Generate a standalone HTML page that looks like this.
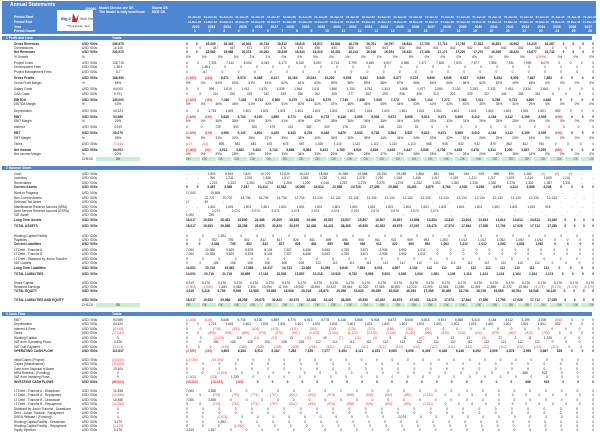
<!DOCTYPE html>
<html><head><meta charset="utf-8"><style>
body{margin:0;width:600px;height:432px;background:#fff;position:relative;overflow:hidden;font-family:"Liberation Sans",sans-serif;color:#222}
.hd{position:absolute;left:2px;top:1px;width:594px;height:33px;background:#4f86d2;color:#fff}
.hd div{position:absolute;font-size:3.4px;line-height:4px;font-weight:bold;white-space:nowrap}
.logo{position:absolute;left:57px;top:10px;width:36px;height:21px;background:#fff}
.sec{position:absolute;left:2px;width:590px;height:4px;background:#4f86d2;color:#fff;font-size:3.3px;line-height:4px;font-weight:bold}
.r{position:absolute;left:0;width:600px;height:4px;font-size:3.2px;line-height:4px;white-space:nowrap}
.r span{position:absolute}
.l{left:14px}.u{left:82px}.t{left:96px;width:44px;text-align:center}
.d{left:186px;width:408px;text-align:justify;text-align-last:justify;white-space:normal;height:4px;overflow:hidden}
.b{font-weight:bold}
.red{color:#e33}
.chk .t{background:#c6efce}
.chk .d{background:repeating-linear-gradient(90deg,#c6efce 0 14px,#fff 14px 15.8px);color:#2a6a2a}
</style></head><body>
<div class="hd">
<div style="left:8px;top:2px;font-size:5px">Annual Statements</div>
<div style="left:83px;top:6px">100000</div>
<div style="left:97px;top:5px">Model Checks are OK</div>
<div style="left:97px;top:9px">The Model is fully functional</div>
<div style="left:150px;top:5px">Macro OK</div>
<div style="left:150px;top:9px">MCE OK</div>
<div style="left:12px;top:14px">Period Start</div>
<div style="left:12px;top:19px">Period End</div>
<div style="left:12px;top:24px">Year</div>
<div style="left:12px;top:28px">Period Count</div>
<div style="left:186px;top:14px;width:408px;text-align:justify;text-align-last:justify;font-size:2.8px">01-Jan-22 01-Jan-23 01-Jan-24 01-Jan-25 01-Jan-26 01-Jan-27 01-Jan-28 01-Jan-29 01-Jan-30 01-Jan-31 01-Jan-32 01-Jan-33 01-Jan-34 01-Jan-35 01-Jan-36 01-Jan-37 01-Jan-38 01-Jan-39 01-Jan-40 01-Jan-41 01-Jan-42 01-Jan-43 01-Jan-44 01-Jan-45 01-Jan-46 01-Jan-47</div>
<div style="left:186px;top:19px;width:408px;text-align:justify;text-align-last:justify;font-size:2.8px">31-Dec-22 31-Dec-23 31-Dec-24 31-Dec-25 31-Dec-26 31-Dec-27 31-Dec-28 31-Dec-29 31-Dec-30 31-Dec-31 31-Dec-32 31-Dec-33 31-Dec-34 31-Dec-35 31-Dec-36 31-Dec-37 31-Dec-38 31-Dec-39 31-Dec-40 31-Dec-41 31-Dec-42 31-Dec-43 31-Dec-44 31-Dec-45 31-Dec-46 31-Dec-47</div>
<div style="left:190px;top:24px;width:400px;text-align:justify;text-align-last:justify">2022 2023 2024 2025 2026 2027 2028 2029 2030 2031 2032 2033 2034 2035 2036 2037 2038 2039 2040 2041 2042 2043 2044 2045 2046 2047</div>
<div style="left:192px;top:28px;width:398px;text-align:justify;text-align-last:justify">1 2 3 4 5 6 7 8 9 10 11 12 13 14 15 16 17 18 19 20 21 22 23 24 25 26</div>
</div>
<div class="logo"><svg width="36" height="21" viewBox="0 0 36 21"><text x="4" y="10" font-size="4" fill="#1a4fa0" font-family="Liberation Sans" font-weight="bold">Big 4</text><path d="M16 3 L19 9 L22 4 L20 12 L15 12 Z" fill="#e02020"/><text x="23" y="10" font-size="3.5" fill="#1a4fa0" font-family="Liberation Sans">Wall Street</text><text x="10" y="17" font-size="3" fill="#333" font-family="Liberation Sans">Think Deals. Sell</text></svg></div>

<div class="sec" style="top:36px"><span style="position:absolute;left:4px">1 Profit and Loss</span><span style="position:absolute;left:110px">Totals</span></div>

<div class="r b" style="top:42px"><span class="l">Gross Revenues</span><span class="u">USD '000s</span><span class="t">336,670</span><span class="d">0 0 16,409 16,433 16,844 16,733 16,812 16,819 16,817 16,891 16,749 16,701 16,797 16,844 17,709 17,712 17,762 17,812 16,851 16,962 16,219 16,287 0 0 0 0</span></div>
<div class="r" style="top:46px"><span class="l">Commissions</span><span class="u">USD '000s</span><span class="t">10,100</span><span class="d">0 0 447 447 471 471 476 475 498 500 508 503 503 503 541 541 542 542 543 542 542 545 0 0 0 0</span></div>
<div class="r b" style="top:50px"><span class="l">Net Revenues</span><span class="u">USD '000s</span><span class="t">326,570</span><span class="d">0 0 15,962 15,986 16,373 16,262 16,336 16,344 16,319 16,391 16,241 16,198 16,294 16,341 17,168 17,171 17,220 17,270 16,308 16,420 15,677 15,742 0 0 0 0</span></div>
<div class="r" style="top:55px"><span class="l">% Growth</span><span class="u">%</span><span class="d">0% 0% 0% 0% 2% 1% 0% 0% 0% 0% 1% 0% 1% 0% 5% 0% 0% 0% 6% 1% 5% 0% <i class="red">(100%)</i> 0% 0% 0%</span></div>
<div class="r" style="top:61px"><span class="l">Project Costs</span><span class="u">USD '000s</span><span class="t">135,715</span><span class="d">0 0 7,391 7,412 8,005 8,045 6,173 6,310 6,067 6,713 6,799 6,649 6,917 6,966 7,472 7,526 7,603 7,677 7,854 7,911 7,990 8,079 0 0 0 0</span></div>
<div class="r" style="top:65px"><span class="l">Development Fees</span><span class="u">USD '000s</span><span class="t">1,803</span><span class="d">0 1,803 0 0 0 0 0 0 0 0 0 0 0 0 0 0 0 0 0 0 0 0 0 0 0 0</span></div>
<div class="r" style="top:70px"><span class="l">Project Management Fees</span><span class="u">USD '000s</span><span class="t">117</span><span class="d">0 117 0 0 0 0 0 0 0 0 0 0 0 0 0 0 0 0 0 0 0 0 0 0 0 0</span></div>
<div class="r b" style="top:76px"><span class="l">Gross Profits</span><span class="u">USD '000s</span><span class="t">188,930</span><span class="d"><i class="red">(1,920)</i> <i class="red">(116)</i> 8,571 8,574 8,368 8,217 10,163 10,034 10,252 9,678 9,442 9,549 9,377 9,375 9,696 9,645 9,617 9,593 8,454 8,509 7,687 7,663 0 0 0 0</span></div>
<div class="r" style="top:81px"><span class="l">Gross Profit Margin</span><span class="u">%</span><span class="t">58%</span><span class="d">0% 0% 54% 54% 51% 51% 62% 61% 63% 59% 58% 59% 58% 57% 56% 56% 56% 56% 52% 52% 49% 49% 0% 0% 0% 0%</span></div>
<div class="r" style="top:87px"><span class="l">Salary Costs</span><span class="u">USD '000s</span><span class="t">44,000</span><span class="d">0 0 999 1,019 1,412 1,475 1,539 1,564 1,611 1,660 1,709 1,761 1,813 1,868 1,977 2,060 2,130 2,253 2,332 2,451 2,534 2,661 0 0 0 0</span></div>
<div class="r" style="top:92px"><span class="l">G&amp;A Costs</span><span class="u">USD '000s</span><span class="t">5,701</span><span class="d">0 0 212 220 225 242 249 256 262 269 277 283 290 298 305 313 321 329 337 345 353 362 0 0 0 0</span></div>
<div class="r b" style="top:98px"><span class="l">EBITDA</span><span class="u">USD '000s</span><span class="t">139,000</span><span class="d"><i class="red">(1,920)</i> <i class="red">(116)</i> 7,360 7,335 6,731 6,500 8,375 8,214 8,379 7,749 7,456 7,505 7,274 7,209 7,414 7,272 7,166 7,011 5,785 5,713 4,800 4,640 0 0 0 0</span></div>
<div class="r" style="top:102px"><span class="l">EBITDA Margin</span><span class="u">%</span><span class="t">43%</span><span class="d">0% 0% 46% 46% 41% 40% 51% 50% 51% 47% 46% 46% 45% 44% 43% 42% 42% 41% 35% 35% 31% 29% 0% 0% 0% 0%</span></div>
<div class="r" style="top:109px"><span class="l">Depreciation</span><span class="u">USD '000s</span><span class="t">44,324</span><span class="d">0 0 1,715 1,601 1,601 1,601 1,601 1,601 1,601 1,601 1,601 1,601 1,601 1,601 1,601 1,601 1,601 1,601 1,601 1,601 1,601 1,601 692 0 0 0</span></div>
<div class="r b" style="top:115px"><span class="l">EBIT</span><span class="u">USD '000s</span><span class="t">94,989</span><span class="d"><i class="red">(1,920)</i> <i class="red">(116)</i> 5,645 5,734 5,130 4,899 6,774 6,613 6,778 6,148 5,855 5,904 5,673 5,608 5,813 5,671 5,565 5,410 4,184 4,112 3,199 3,039 <i class="red">(692)</i> 0 0 0</span></div>
<div class="r" style="top:119px"><span class="l">EBIT Margin</span><span class="u">%</span><span class="t">29%</span><span class="d">0% 0% 35% 36% 31% 30% 41% 40% 42% 38% 36% 36% 35% 34% 34% 33% 32% 31% 26% 25% 20% 19% 0% 0% 0% 0%</span></div>
<div class="r" style="top:125px"><span class="l">Interest</span><span class="u">USD '000s</span><span class="t">4,919</span><span class="d">0 0 739 591 526 479 431 382 330 278 223 168 110 51 0 0 0 0 0 0 0 0 0 0 0 0</span></div>
<div class="r b" style="top:131px"><span class="l">EBT</span><span class="u">USD '000s</span><span class="t">90,070</span><span class="d"><i class="red">(1,920)</i> <i class="red">(116)</i> 4,906 5,143 4,604 4,420 6,343 6,231 6,448 5,870 5,632 5,736 5,563 5,557 5,813 5,671 5,565 5,410 4,184 4,112 3,199 3,039 <i class="red">(692)</i> 0 0 0</span></div>
<div class="r" style="top:136px"><span class="l">EBT Margin</span><span class="u">%</span><span class="t">28%</span><span class="d">0% 0% 31% 32% 28% 27% 39% 38% 40% 36% 35% 35% 34% 34% 34% 33% 32% 31% 26% 25% 20% 19% 0% 0% 0% 0%</span></div>
<div class="r" style="top:142px"><span class="l">Taxes</span><span class="u">USD '000s</span><span class="t red">17,044</span><span class="d"><i class="red">(17)</i> <i class="red">(23)</i> 895 681 681 676 675 667 1,025 1,110 1,110 1,110 1,110 1,110 968 935 932 932 870 862 812 784 0 0 0 0</span></div>
<div class="r b" style="top:148px"><span class="l">Net Income</span><span class="u">USD '000s</span><span class="t">64,001</span><span class="d"><i class="red">(1,903)</i> <i class="red">(93)</i> 4,011 4,462 3,923 3,744 5,668 5,564 5,423 4,760 4,522 4,626 4,453 4,447 4,845 4,736 4,633 4,478 3,314 3,250 2,387 2,255 <i class="red">(692)</i> 0 0 0</span></div>
<div class="r" style="top:152px"><span class="l">Net Income Margin</span><span class="u">%</span><span class="t">20%</span><span class="d">0% 0% 25% 28% 24% 23% 35% 34% 33% 29% 28% 28% 27% 27% 28% 28% 27% 26% 20% 20% 15% 14% 0% 0% 0% 0%</span></div>
<div class="r chk" style="top:157px"><span class="u">CHECK</span><span class="t">OK</span><span class="d">OK OK OK OK OK OK OK OK OK OK OK OK OK OK OK OK OK OK OK OK OK OK OK OK OK OK</span></div>

<div class="sec" style="top:166px"><span style="position:absolute;left:4px">2 Balance Sheet</span></div>

<div class="r" style="top:172px"><span class="l">Cash</span><span class="u">USD '000s</span><span class="d">- - 1,500 8,524 7,820 10,270 12,020 15,012 18,081 21,085 23,588 26,252 29,289 1,806 881 956 940 925 858 870 1,262 <i class="red">(0)</i> <i class="red">(0)</i> <i class="red">(0)</i> - -</span></div>
<div class="r" style="top:176px"><span class="l">Inventory</span><span class="u">USD '000s</span><span class="d">- - 766 1,231 1,003 1,626 1,617 1,583 1,228 1,163 1,278 1,292 1,015 1,408 1,417 1,419 1,221 1,217 1,675 1,614 1,609 1,241 - -</span></div>
<div class="r" style="top:181px"><span class="l">Receivables</span><span class="u">USD '000s</span><span class="d">- - 1,222 1,224 1,263 1,293 1,265 1,290 1,318 1,267 1,275 1,275 1,276 1,282 1,352 1,352 1,318 1,352 1,378 1,342 1,357 1,331 - -</span></div>
<div class="r b" style="top:185px"><span class="l">Current Assets</span><span class="u">USD '000s</span><span class="d">0 0 3,487 3,368 7,287 10,414 12,582 16,066 18,614 22,558 24,728 27,495 29,868 33,261 4,675 3,764 4,030 4,036 3,979 4,114 3,898 4,246 0 0 0 0</span></div>
<div class="r" style="top:191px"><span class="l">Work in Progress</span><span class="u">USD '000s</span><span class="d">17,000 19,658 - - - - - - - - - - - - - - - - - - - - - - - -</span></div>
<div class="r" style="top:196px"><span class="l">Non-Current Assets</span><span class="u">USD '000s</span><span class="d">- - 22,737 20,737 18,736 16,735 14,735 12,734 12,134 12,134 12,134 12,134 12,134 12,134 12,134 12,134 12,134 12,134 12,134 12,134 12,134 12,134 - - - -</span></div>
<div class="r" style="top:200px"><span class="l">Deferred Tax Asset</span><span class="u">USD '000s</span><span class="d">17 40 - - - - - - - - - - - - - - - - - - - - - - - -</span></div>
<div class="r" style="top:205px"><span class="l">Maintenance Reserve Account (MRA)</span><span class="u">USD '000s</span><span class="d">- - 1,601 1,601 1,601 1,601 1,601 1,601 1,601 1,601 1,601 1,601 1,601 1,601 1,601 1,601 1,601 1,601 1,601 1,601 1,601 915 - - - -</span></div>
<div class="r" style="top:209px"><span class="l">Debt Service Reserve Account (DSRA)</span><span class="u">USD '000s</span><span class="d">- - 2,074 2,074 2,074 2,074 2,074 2,074 2,074 2,074 2,074 2,074 2,074 2,074 - - - - - - - - - - - -</span></div>
<div class="r" style="top:213px"><span class="l">VAT Asset</span><span class="u">USD '000s</span><span class="d">1,000 235 - - - - - - - - - - - - - - - - - - - - - - - -</span></div>
<div class="r b" style="top:218px"><span class="l">Long Term Assets</span><span class="u">USD '000s</span><span class="d">18,017 19,933 26,481 24,890 22,388 20,409 18,388 16,360 15,807 15,807 15,807 15,807 15,807 13,806 13,804 13,810 13,814 13,814 13,814 13,814 13,814 13,049 0 0 0 0</span></div>
<div class="r b" style="top:224px"><span class="l">TOTAL ASSETS</span><span class="u">USD '000s</span><span class="d">18,017 19,933 29,968 28,258 29,675 30,823 30,970 32,426 34,421 38,365 40,535 43,302 45,675 47,067 18,479 17,574 17,844 17,850 17,793 17,928 17,712 17,295 0 0 0 0</span></div>
<div class="r" style="top:234px"><span class="l">Working Capital Facility</span><span class="u">USD '000s</span><span class="d">0 0 1,592 0 0 0 0 0 0 0 0 0 0 0 0 0 0 0 0 0 0 0 0 0 0 0</span></div>
<div class="r" style="top:238px"><span class="l">Payables</span><span class="u">USD '000s</span><span class="d">0 0 762 795 802 812 817 825 881 899 898 906 911 922 969 993 1,002 1,012 1,012 1,052 1,052 1,062 0 0 0 0</span></div>
<div class="r b" style="top:242px"><span class="l">Current Liabilities</span><span class="u">USD '000s</span><span class="d">0 0 2,354 795 802 812 817 825 881 899 898 906 911 922 969 993 1,002 1,012 1,012 1,052 1,052 1,062 0 0 0 0</span></div>
<div class="r" style="top:248px"><span class="l">LT Debt - Tranche A</span><span class="u">USD '000s</span><span class="d">7,000 10,358 9,629 8,878 8,104 7,307 6,486 5,643 4,769 3,871 2,945 1,992 1,011 0 0 0 0 0 0 0 0 0 0 0 0 0</span></div>
<div class="r" style="top:252px"><span class="l">LT Debt - Tranche B</span><span class="u">USD '000s</span><span class="d">7,000 10,358 9,629 8,878 8,104 7,307 6,486 5,643 4,769 3,871 2,945 1,992 1,011 0 0 0 0 0 0 0 0 0 0 0 0 0</span></div>
<div class="r" style="top:257px"><span class="l">LT Debt - Standard by Junior Tranche</span><span class="u">USD '000s</span><span class="d">0 0 0 0 0 0 0 0 0 0 0 0 0 0 0 0 0 0 0 0 0 0 0 0 0 0</span></div>
<div class="r" style="top:261px"><span class="l">VAT Liability</span><span class="u">USD '000s</span><span class="d">0 0 105 108 108 108 108 108 112 112 112 112 112 112 112 112 112 112 112 112 112 112 0 0 0 0</span></div>
<div class="r b" style="top:266px"><span class="l">Long Term Liabilities</span><span class="u">USD '000s</span><span class="d">14,001 20,716 19,362 17,864 16,317 14,723 13,080 11,393 9,649 7,853 6,001 4,097 2,134 112 112 112 112 112 112 112 112 112 0 0 0 0</span></div>
<div class="r b" style="top:272px"><span class="l">TOTAL LIABILITIES</span><span class="u">USD '000s</span><span class="d">14,001 20,716 21,716 18,659 17,119 15,535 13,897 12,218 10,530 8,752 6,899 5,003 3,045 1,034 1,081 1,105 1,114 1,124 1,124 1,164 1,164 1,174 0 0 0 0</span></div>
<div class="r" style="top:281px"><span class="l">Share Capital</span><span class="u">USD '000s</span><span class="d">5,919 5,176 5,176 5,176 5,176 5,176 5,176 5,176 5,176 5,176 5,176 5,176 5,176 5,176 5,176 5,176 5,176 5,176 5,176 5,176 5,176 5,176 5,176 5,176 5,176 5,176</span></div>
<div class="r" style="top:285px"><span class="l">Retained Earnings</span><span class="u">USD '000s</span><span class="d"><i class="red">(1,903)</i> <i class="red">(1,960)</i> 1,484 4,462 7,404 10,094 11,760 15,042 18,494 24,122 28,444 32,320 37,563 40,857 12,222 11,293 11,554 11,550 11,493 11,588 11,372 10,944 <i class="red">(5,176)</i> <i class="red">(5,176)</i> <i class="red">(5,176)</i> <i class="red">(5,176)</i></span></div>
<div class="r b" style="top:289px"><span class="l">TOTAL EQUITY</span><span class="u">USD '000s</span><span class="d">4,016 3,216 5,705 9,599 12,580 15,288 16,936 20,218 23,670 29,298 33,620 38,299 42,630 46,033 17,398 16,469 16,730 16,726 16,669 16,764 16,548 16,120 0 0 0 0</span></div>
<div class="r b" style="top:298px"><span class="l">TOTAL LIABILITIES AND EQUITY</span><span class="u">USD '000s</span><span class="d">18,017 19,933 29,968 28,258 29,675 30,823 30,970 32,426 34,421 38,365 40,535 43,302 45,675 47,067 18,479 17,574 17,844 17,850 17,793 17,928 17,712 17,295 0 0 0 0</span></div>
<div class="r chk" style="top:303px"><span class="u">CHECK</span><span class="t">OK</span><span class="d">OK OK OK OK OK OK OK OK OK OK OK OK OK OK OK OK OK OK OK OK OK OK OK OK OK OK</span></div>

<div class="sec" style="top:312px"><span style="position:absolute;left:4px">3 Cash Flow</span><span style="position:absolute;left:110px">Totals</span></div>

<div class="r" style="top:318px"><span class="l">EBIT</span><span class="u">USD '000s</span><span class="t">94,989</span><span class="d"><i class="red">(1,920)</i> <i class="red">(116)</i> 5,645 5,734 5,130 4,899 6,774 6,613 6,778 6,148 5,855 5,904 5,673 5,608 5,813 5,671 5,565 5,410 4,184 4,112 3,199 3,039 <i class="red">(692)</i> 0 0 0</span></div>
<div class="r" style="top:322px"><span class="l">Depreciation</span><span class="u">USD '000s</span><span class="t">44,324</span><span class="d">0 0 1,715 1,601 1,601 1,601 1,601 1,601 1,601 1,601 1,601 1,601 1,601 1,601 1,601 1,601 1,601 1,601 1,601 1,601 1,601 1,601 692 0 0 0</span></div>
<div class="r" style="top:327px"><span class="l">Interest &amp; Fees</span><span class="u">USD '000s</span><span class="t red">(4,919)</span><span class="d">0 0 <i class="red">(739)</i> <i class="red">(591)</i> <i class="red">(526)</i> <i class="red">(479)</i> <i class="red">(431)</i> <i class="red">(382)</i> <i class="red">(330)</i> <i class="red">(278)</i> <i class="red">(223)</i> <i class="red">(168)</i> <i class="red">(110)</i> <i class="red">(51)</i> 0 0 0 0 0 0 0 0 0 0 0 0</span></div>
<div class="r" style="top:331px"><span class="l">Taxes</span><span class="u">USD '000s</span><span class="t red">(17,044)</span><span class="d">0 0 <i class="red">(895)</i> <i class="red">(681)</i> <i class="red">(681)</i> <i class="red">(676)</i> <i class="red">(675)</i> <i class="red">(667)</i> <i class="red">(1,025)</i> <i class="red">(1,110)</i> <i class="red">(1,110)</i> <i class="red">(1,110)</i> <i class="red">(1,110)</i> <i class="red">(1,110)</i> <i class="red">(968)</i> <i class="red">(935)</i> <i class="red">(932)</i> <i class="red">(932)</i> <i class="red">(870)</i> <i class="red">(862)</i> <i class="red">(812)</i> <i class="red">(784)</i> 0 0 0 0</span></div>
<div class="r" style="top:336px"><span class="l">Working Capital</span><span class="u">USD '000s</span><span class="t">0</span><span class="d">0 0 <i class="red">(1,226)</i> 118 <i class="red">(11)</i> <i class="red">(13)</i> 13 <i class="red">(10)</i> 49 <i class="red">(7)</i> <i class="red">(12)</i> <i class="red">(4)</i> 6 11 <i class="red">(47)</i> 8 12 13 <i class="red">(9)</i> 27 2 11 1,329 0 0 0</span></div>
<div class="r" style="top:340px"><span class="l">VAT from Operating Flows</span><span class="u">USD '000s</span><span class="t">3,226</span><span class="d">0 0 105 108 108 108 108 108 112 112 112 112 112 112 112 112 112 112 112 112 112 112 0 0 0 0</span></div>
<div class="r" style="top:345px"><span class="l">VAT Due Payment</span><span class="u">USD '000s</span><span class="t red">(3,214)</span><span class="d">0 0 0 <i class="red">(105)</i> <i class="red">(108)</i> <i class="red">(108)</i> <i class="red">(108)</i> <i class="red">(108)</i> <i class="red">(108)</i> <i class="red">(112)</i> <i class="red">(112)</i> <i class="red">(112)</i> <i class="red">(112)</i> <i class="red">(112)</i> <i class="red">(112)</i> <i class="red">(112)</i> <i class="red">(112)</i> <i class="red">(112)</i> <i class="red">(112)</i> <i class="red">(112)</i> <i class="red">(112)</i> <i class="red">(112)</i> <i class="red">(112)</i> 0 0 0</span></div>
<div class="r b" style="top:349px"><span class="l">OPERATING CASH FLOW</span><span class="u">USD '000s</span><span class="t">119,837</span><span class="d"><i class="red">(1,920)</i> <i class="red">(116)</i> 4,605 6,184 5,513 5,332 7,282 7,155 7,077 6,354 6,111 6,223 6,060 6,059 6,399 6,345 6,246 6,092 4,906 4,878 3,990 3,867 525 0 0 0</span></div>
<div class="r" style="top:358px"><span class="l">Initial Capex (Project)</span><span class="u">USD '000s</span><span class="t red">(33,000)</span><span class="d"><i class="red">(17,000)</i> <i class="red">(16,000)</i> 0 0 0 0 0 0 0 0 0 0 0 0 0 0 0 0 0 0 0 0 0 0 0 0</span></div>
<div class="r" style="top:362px"><span class="l">Capex (Maintenance)</span><span class="u">USD '000s</span><span class="t red">(33,000)</span><span class="d">0 0 0 0 0 0 0 0 0 0 0 0 0 0 0 0 0 0 0 0 0 0 0 0 0 0</span></div>
<div class="r" style="top:367px"><span class="l">Cash from Disposal of Asset</span><span class="u">USD '000s</span><span class="t">13,404</span><span class="d">0 0 0 0 0 0 0 0 0 0 0 0 0 0 0 0 0 0 0 0 0 0 0 0 0 0</span></div>
<div class="r" style="top:371px"><span class="l">MRA Release / (Funding)</span><span class="u">USD '000s</span><span class="t">0</span><span class="d">0 0 <i class="red">(1,601)</i> 0 0 0 0 0 0 0 0 0 0 0 0 0 0 0 0 0 0 686 915 0 0 0</span></div>
<div class="r" style="top:375px"><span class="l">VAT from Investing Flows</span><span class="u">USD '000s</span><span class="t">0</span><span class="d"><i class="red">(1,000)</i> <i class="red">(235)</i> 1,235 0 0 0 0 0 0 0 0 0 0 0 0 0 0 0 0 0 0 0 0 0 0 0</span></div>
<div class="r b" style="top:380px"><span class="l">INVESTING CASH FLOWS</span><span class="u">USD '000s</span><span class="t red">(86,000)</span><span class="d"><i class="red">(18,000)</i> <i class="red">(16,235)</i> <i class="red">(366)</i> 0 0 0 0 0 0 0 0 0 0 0 0 0 0 0 0 0 0 686 915 0 0 0</span></div>
<div class="r" style="top:389px"><span class="l">LT Debt - Tranche A - Drawdown</span><span class="u">USD '000s</span><span class="t">10,358</span><span class="d">7,000 3,358 0 0 0 0 0 0 0 0 0 0 0 0 0 0 0 0 0 0 0 0 0 0 0 0</span></div>
<div class="r" style="top:393px"><span class="l">LT Debt - Tranche A - Repayment</span><span class="u">USD '000s</span><span class="t red">(10,358)</span><span class="d">0 0 <i class="red">(729)</i> <i class="red">(751)</i> <i class="red">(774)</i> <i class="red">(797)</i> <i class="red">(821)</i> <i class="red">(843)</i> <i class="red">(874)</i> <i class="red">(898)</i> <i class="red">(926)</i> <i class="red">(953)</i> <i class="red">(981)</i> <i class="red">(1,011)</i> 0 0 0 0 0 0 0 0 0 0 0 0</span></div>
<div class="r" style="top:398px"><span class="l">LT Debt - Tranche B - Drawdown</span><span class="u">USD '000s</span><span class="t">10,358</span><span class="d">7,000 3,358 0 0 0 0 0 0 0 0 0 0 0 0 0 0 0 0 0 0 0 0 0 0 0 0</span></div>
<div class="r" style="top:402px"><span class="l">LT Debt - Tranche B - Repayment</span><span class="u">USD '000s</span><span class="t red">(10,358)</span><span class="d">0 0 <i class="red">(729)</i> <i class="red">(751)</i> <i class="red">(774)</i> <i class="red">(797)</i> <i class="red">(821)</i> <i class="red">(843)</i> <i class="red">(874)</i> <i class="red">(898)</i> <i class="red">(926)</i> <i class="red">(953)</i> <i class="red">(981)</i> <i class="red">(1,011)</i> 0 0 0 0 0 0 0 0 0 0 0 0</span></div>
<div class="r" style="top:407px"><span class="l">Standard by Junior Tranche - Drawdown</span><span class="u">USD '000s</span><span class="t">0</span><span class="d">0 0 0 0 0 0 0 0 0 0 0 0 0 0 0 0 0 0 0 0 0 0 0 0 0 0</span></div>
<div class="r" style="top:411px"><span class="l">Debt - Junior Tranche - Repayment</span><span class="u">USD '000s</span><span class="t">0</span><span class="d">0 0 0 0 0 0 0 0 0 0 0 0 0 0 0 0 0 0 0 0 0 0 0 0 0 0</span></div>
<div class="r" style="top:415px"><span class="l">DSRA Release / (Funding)</span><span class="u">USD '000s</span><span class="t">0</span><span class="d">0 0 <i class="red">(2,074)</i> 0 0 0 0 0 0 0 0 0 0 2,074 0 0 0 0 0 0 0 0 0 0 0 0</span></div>
<div class="r" style="top:420px"><span class="l">Working Capital Facility - Drawdown</span><span class="u">USD '000s</span><span class="t">3,179</span><span class="d">0 0 1,592 0 0 0 0 0 0 0 0 0 0 0 0 0 0 0 0 0 0 0 0 0 0 0</span></div>
<div class="r" style="top:424px"><span class="l">Working Capital Facility - Repayment</span><span class="u">USD '000s</span><span class="t red">(3,179)</span><span class="d">0 0 0 <i class="red">(1,592)</i> 0 0 0 0 0 0 0 0 0 0 0 0 0 0 0 0 0 0 0 0 0 0</span></div>
<div class="r" style="top:428px"><span class="l">Equity Injection</span><span class="u">USD '000s</span><span class="t">5,176</span><span class="d">3,919 1,257 0 0 0 0 0 0 0 0 0 0 0 0 0 0 0 0 0 0 0 0 0 0 0 0</span></div>
</body></html>
